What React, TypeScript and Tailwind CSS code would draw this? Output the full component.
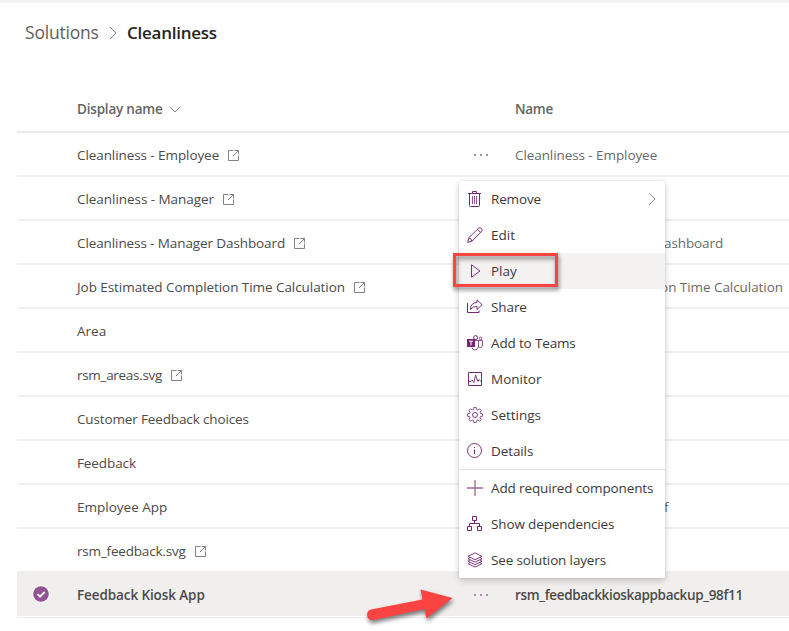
import type { ReactNode } from "react";

const rows: { label: string; link?: boolean; name?: string; dots?: boolean; track: string }[] = [
  { label: "Cleanliness - Employee", link: true, name: "Cleanliness - Employee", dots: true, track: "tracking-[-0.08px]" },
  { label: "Cleanliness - Manager", link: true, track: "tracking-[-0.05px]" },
  { label: "Cleanliness - Manager Dashboard", link: true, name: "Cleanliness - Manager Dashboard", track: "tracking-[-0.1px]" },
  { label: "Job Estimated Completion Time Calculation", link: true, name: "Job Estimated Completion Time Calculation", track: "tracking-[-0.06px]" },
  { label: "Area", track: "tracking-normal" },
  { label: "rsm_areas.svg", link: true, track: "tracking-[-0.3px]" },
  { label: "Customer Feedback choices", track: "tracking-[-0.14px]" },
  { label: "Feedback", track: "tracking-[-0.1px]" },
  { label: "Employee App", name: "f", track: "tracking-normal" },
  { label: "rsm_feedback.svg", link: true, track: "tracking-[-0.19px]" },
];

function Icon({ children }: { children: ReactNode }) {
  return (
    <svg width="16" height="16" viewBox="0 0 16 16" fill="none" stroke="#742774" strokeWidth="1" className="shrink-0">
      {children}
    </svg>
  );
}

const menu: { label: string; track: string; icon: ReactNode }[] = [
  {
    label: "Remove",
    track: "tracking-[-0.15px]",
    icon: (
      <Icon>
        <path d="M1 2.500h13M5.500 2.500v-2h4v2M2.500 2.500v12q0 1 1 1h8q1 0 1-1v-12" />
        <path d="M5.500 5v8M7.500 5v8M9.500 5v8" strokeWidth=".8" />
      </Icon>
    ),
  },
  {
    label: "Edit",
    track: "tracking-normal",
    icon: (
      <Icon>
        <path d="M.7 15.300l1.100-4.500L11.700 1.100q1.300-1.100 2.700 0.300t.2 2.900L4.900 14.200zM10.500 2.300l3 3M1.800 10.800q2.500.5 3.100 3.300" strokeWidth=".95" />
      </Icon>
    ),
  },
  {
    label: "Play",
    track: "tracking-normal",
    icon: (
      <Icon>
        <path d="M4.500 1.800v12.400L13 8z" strokeWidth=".95" />
      </Icon>
    ),
  },
  {
    label: "Share",
    track: "tracking-[-0.1px]",
    icon: (
      <Icon>
        <path d="M.5 4v9.500h11.500v-2" />
        <path d="M3.300 10.500Q3.700 3.800 10 3.500V.9l5.200 4.800L10 10.500V7.500Q6 7 3.300 10.500z" strokeWidth=".95" />
      </Icon>
    ),
  },
  {
    label: "Add to Teams",
    track: "tracking-[-0.15px]",
    icon: (
      <Icon>
        <path d="M0 4h8v8H0z" fill="#742774" stroke="none" />
        <path d="M2 6.200h4M4 6.200v4.200" stroke="#fff" />
        <circle cx="8.600" cy="2.600" r="2" />
        <circle cx="13.700" cy="3.300" r="1.300" strokeWidth=".8" />
        <path d="M8 5.500h3.500v6q-.5 3.500-3.500 3.500-2.200 0-3.100-2.500M11.500 5.500h4v4.500q0 2.500-2 2.500-1.300 0-2-.7" strokeWidth=".8" />
      </Icon>
    ),
  },
  {
    label: "Monitor",
    track: "tracking-normal",
    icon: (
      <Icon>
        <path d="M1.500 1.500h13v13h-13z" />
        <path d="M1.500 10.500H4l1.200-1.500 1.600 2.500L8.600 4l2.200 6.500L12 8.500l2.200 2.300" strokeWidth=".9" />
      </Icon>
    ),
  },
  {
    label: "Settings",
    track: "tracking-normal",
    icon: (
      <Icon>
        <path d="M6.800.5h2.400l.4 2 1.300.5L12.600 1.900 14.200 3.500 13 5.200l.5 1.300 2 .3v2.400l-2 .4-.5 1.300 1.200 1.600-1.700 1.700-1.700-1.200-1.200.5-.4 2H6.800l-.4-2-1.200-.5-1.700 1.200-1.700-1.700L3 10.900l-.5-1.300-2-.4V6.800l2-.3L3 5.200 1.800 3.500l1.700-1.600L5.200 3l1.200-.5z" strokeWidth=".8" />
        <circle cx="8" cy="8" r="2.500" strokeWidth=".9" />
      </Icon>
    ),
  },
  {
    label: "Details",
    track: "tracking-[-0.1px]",
    icon: (
      <Icon>
        <circle cx="7.500" cy="7.500" r="7" strokeWidth=".95" />
        <path d="M7.500 6.500V11M7.500 4v1" />
      </Icon>
    ),
  },
  {
    label: "Add required components",
    track: "tracking-[-0.13px]",
    icon: (
      <Icon>
        <path d="M8 0v16M0 8h16" strokeWidth="1.300" opacity=".7" />
      </Icon>
    ),
  },
  {
    label: "Show dependencies",
    track: "tracking-[-0.14px]",
    icon: (
      <Icon>
        <path d="M5.500.5h4v4h-4zM.5 10.500h4v4h-4zM10.500 10.500h4v4h-4zM7.500 4.500v3M2.500 10.500v-3h10v3" />
      </Icon>
    ),
  },
  {
    label: "See solution layers",
    track: "tracking-[-0.14px]",
    icon: (
      <Icon>
        <path d="M8 .9l7 3.400-7 3.400-7-3.400zM3 5.500L1 6.700l7 3.400 7-3.400-2-1.200M3 8L1 9.200l7 3.400 7-3.400L13 8M3 10.500l-2 1.200 7 3.400 7-3.400-2-1.200" strokeWidth=".9" />
      </Icon>
    ),
  },
];

function LinkIcon() {
  return (
    <svg width="11" height="11" viewBox="0 0 11 11" fill="none" stroke="#777572" className="ml-[9px] shrink-0">
      <path d="M5.500.5h-5v10h10v-5M6.500.5h4v4M10.500.5L5 6" strokeWidth=".9" />
    </svg>
  );
}

function Dots() {
  return (
    <svg width="16" height="2" viewBox="0 0 16 2" fill="#b08ab0">
      <path d="M1 0h2v2H1zM7 0h2v2H7zM13 0h2v2h-2z" />
    </svg>
  );
}

function MenuItem({ item }: { item: (typeof menu)[number] }) {
  return (
    <li className={`flex h-9 items-center pl-2 pr-[9px] ${item.label === "Play" ? "bg-[#f3f2f1]" : ""}`}>
      {item.icon}
      <span className={`ml-2 whitespace-nowrap ${item.track}`}>{item.label}</span>
      {item.label === "Remove" && (
        <svg width="8" height="14" viewBox="0 0 8 14" fill="none" stroke="#8a8886" className="ml-auto">
          <path d="M1 1l6 6-6 6" />
        </svg>
      )}
    </li>
  );
}

export default function App() {
  return (
    <div className="relative h-[631px] w-[789px] overflow-hidden bg-white font-['Open_Sans','Noto_Sans',sans-serif] text-[13.5px] leading-5 text-[#4b4a48]">
      <div className="h-[3px] bg-[#f3f2f1]" />
      <nav className="flex h-[60px] items-center pl-[25px] text-[#605e5c]">
        <span className="w-[74px] pb-[2px] text-[17.5px] tracking-[-0.2px]">Solutions</span>
        <svg width="8" height="14" viewBox="0 0 8 14" fill="none" stroke="#8a8886" className="ml-[10px]">
          <path d="M1 1l6 6-6 6" />
        </svg>
        <span className="ml-[10px] text-[17px] font-semibold tracking-[-0.25px] text-[#252423]">Cleanliness</span>
      </nav>
      <main className="ml-[17px] mt-[25px]">
        <div className="flex h-[45px] items-center border-b-2 border-[#edebe9] pb-px pl-[60px] font-semibold text-[#666462]">
          <div className="flex w-[438px] items-center tracking-[-0.2px]">
            Display name
            <svg width="12" height="7" viewBox="0 0 12 7" fill="none" stroke="#8a8886" className="ml-[6px]">
              <path d="M.5.5L6 6 11.500.5" />
            </svg>
          </div>
          <div className="tracking-[-0.3px]">Name</div>
        </div>
        {rows.map((row) => (
          <div key={row.label} className="flex h-11 items-center whitespace-nowrap border-b-2 border-[#f1f0ef] pl-[60px] pt-[2px]">
            <div className="flex w-[396px] items-center">
              <span className={row.track}>{row.label}</span>
              {row.link && <LinkIcon />}
            </div>
            <div className="flex w-[42px]">{row.dots && <Dots />}</div>
            <span className={`text-[#6b6967] ${row.track} ${row.name === "f" ? "pl-[149px]" : ""}`}>{row.name}</span>
          </div>
        ))}
        <div className="-mt-px flex h-11 items-center bg-[#f0efee] pl-4 pt-[2px] font-semibold">
          <svg width="16" height="16" viewBox="0 0 16 16" className="shrink-0 overflow-visible">
            <circle cx="8" cy="7" r="8.700" fill="#fff" />
            <circle cx="8" cy="7" r="7.800" fill="#915193" />
            <path d="M4.500 7.200l2.500 2.500 4.700-4.700" fill="none" stroke="#fff" strokeWidth="1.800" />
          </svg>
          <span className="ml-7 w-[396px] tracking-[-0.1px]">Feedback Kiosk App</span>
          <div className="flex w-[42px]"><Dots /></div>
          <span className="tracking-[-0.33px]">rsm_feedbackkioskappbackup_98f11</span>
        </div>
        <div className="mt-px h-px bg-[#edebe9]" />
      </main>

      <ul className="absolute left-[459px] top-[181px] w-[206px] rounded-[2px] bg-white text-[#3b3a39] shadow-[0_3px_7px_rgba(0,0,0,0.17),0_0_3px_rgba(0,0,0,0.13)]">
        {menu.slice(0, 8).map((item) => <MenuItem key={item.label} item={item} />)}
        <li className="h-px bg-[#e3e1df]" />
        {menu.slice(8).map((item) => <MenuItem key={item.label} item={item} />)}
      </ul>

      <svg width="120" height="50" viewBox="450 245 120 50" className="absolute left-[450px] top-[245px] overflow-visible">
        <rect x="454.500" y="254.500" width="102" height="31" fill="none" stroke="#fa4343" strokeWidth="3" className="drop-shadow-[1px_3px_2px_rgba(0,0,0,0.5)]" />
      </svg>
      <svg width="100" height="50" viewBox="360 580 100 50" className="absolute left-[360px] top-[580px] overflow-visible">
        <path d="M371 609.500L422.500 599.500 420.500 589.500 452.500 598 426.500 618.500 424.500 609 373.500 620C366.500 621 364.500 611.500 371 609.500z" fill="#fb4341" className="drop-shadow-[1px_3px_2px_rgba(0,0,0,0.5)]" />
      </svg>
    </div>
  );
}
